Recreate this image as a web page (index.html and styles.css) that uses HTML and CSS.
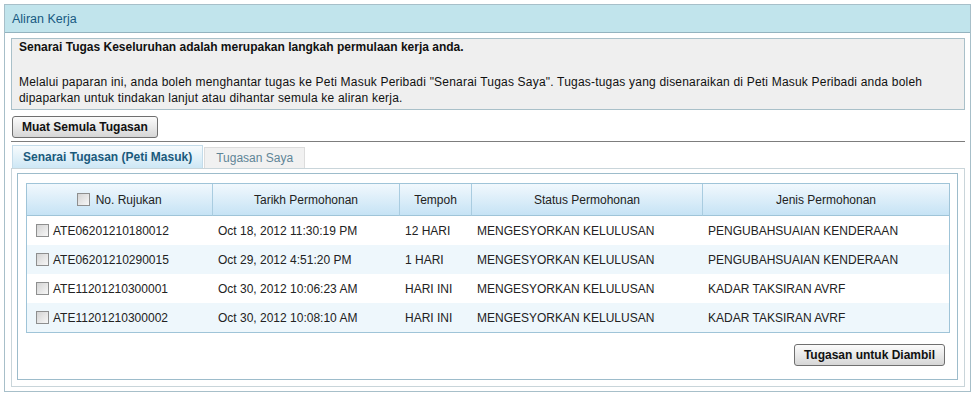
FILE: index.html
```html
<!DOCTYPE html>
<html lang="ms">
<head>
    <meta charset="UTF-8">
    <meta name="viewport" content="width=device-width, initial-scale=1.0">
    <title>Aliran Kerja</title>
    <link rel="stylesheet" href="styles.css">
</head>
<body>
    <div class="panel">
        <div class="panel-header">Aliran Kerja</div>
        <div class="panel-body">
            <div class="info-box">
                <p class="info-title">Senarai Tugas Keseluruhan adalah merupakan langkah permulaan kerja anda.</p>
                <p class="info-text">Melalui paparan ini, anda boleh menghantar tugas ke Peti Masuk Peribadi "Senarai Tugas Saya". Tugas-tugas yang disenaraikan di Peti Masuk Peribadi anda boleh dipaparkan untuk tindakan lanjut atau dihantar semula ke aliran kerja.</p>
            </div>

            <button class="btn btn-reload">Muat Semula Tugasan</button>
            <div class="divider"></div>

            <div class="tabs">
                <span class="tab active">Senarai Tugasan (Peti Masuk)</span>
                <span class="tab">Tugasan Saya</span>
            </div>

            <div class="tab-content">
                <div class="grid-box">
                    <table class="task-table">
                        <colgroup>
                            <col style="width: 185px">
                            <col style="width: 187px">
                            <col style="width: 72px">
                            <col style="width: 231px">
                            <col style="width: 247px">
                        </colgroup>
                        <thead>
                            <tr>
                                <th><input type="checkbox" class="chk"> No. Rujukan</th>
                                <th>Tarikh Permohonan</th>
                                <th>Tempoh</th>
                                <th>Status Permohonan</th>
                                <th>Jenis Permohonan</th>
                            </tr>
                        </thead>
                        <tbody>
                            <tr>
                                <td class="ref"><input type="checkbox" class="chk">ATE06201210180012</td>
                                <td>Oct 18, 2012 11:30:19 PM</td>
                                <td>12 HARI</td>
                                <td>MENGESYORKAN KELULUSAN</td>
                                <td>PENGUBAHSUAIAN KENDERAAN</td>
                            </tr>
                            <tr>
                                <td class="ref"><input type="checkbox" class="chk">ATE06201210290015</td>
                                <td>Oct 29, 2012 4:51:20 PM</td>
                                <td>1 HARI</td>
                                <td>MENGESYORKAN KELULUSAN</td>
                                <td>PENGUBAHSUAIAN KENDERAAN</td>
                            </tr>
                            <tr>
                                <td class="ref"><input type="checkbox" class="chk">ATE11201210300001</td>
                                <td>Oct 30, 2012 10:06:23 AM</td>
                                <td>HARI INI</td>
                                <td>MENGESYORKAN KELULUSAN</td>
                                <td>KADAR TAKSIRAN AVRF</td>
                            </tr>
                            <tr>
                                <td class="ref"><input type="checkbox" class="chk">ATE11201210300002</td>
                                <td>Oct 30, 2012 10:08:10 AM</td>
                                <td>HARI INI</td>
                                <td>MENGESYORKAN KELULUSAN</td>
                                <td>KADAR TAKSIRAN AVRF</td>
                            </tr>
                        </tbody>
                    </table>
                    <div class="grid-actions">
                        <button class="btn">Tugasan untuk Diambil</button>
                    </div>
                </div>
            </div>
        </div>
    </div>
</body>
</html>
```

FILE: styles.css
```css
body {
    font-family: "Liberation Sans", Arial, sans-serif;
    font-size: 12px;
    color: #111;
    margin: 0;
    padding: 4px;
    background-color: #fff;
}

.panel {
    border: 1px solid #a7bfc9;
}

.panel-header {
    height: 27px;
    line-height: 28px;
    padding-left: 7px;
    background-color: #c1e4ec;
    border-bottom: 1px solid #93b3bf;
    color: #175a82;
    font-size: 12.5px;
}

.panel-body {
    padding: 5px 5px 4px 6px;
}

.info-box {
    border: 1px solid #a9c0c9;
    background-color: #efefef;
    padding: 0 7px 3px;
    line-height: 16px;
}

.info-box p {
    margin: 0;
}

.info-box .info-title {
    font-weight: bold;
    margin-bottom: 19px;
}

.info-box .info-text {
    letter-spacing: 0.2px;
}

.btn {
    font-family: "Liberation Sans", Arial, sans-serif;
    font-size: 12px;
    font-weight: bold;
    color: #111;
    height: 22px;
    padding: 0 9px;
    white-space: nowrap;
    border: 1px solid #6f6f6f;
    border-radius: 3px;
    background: linear-gradient(#fbfbfb, #e9e9e9 50%, #d6d6d6);
    cursor: pointer;
}

.btn-reload {
    display: block;
    margin: 6px 0 0 1px;
}

.divider {
    height: 1px;
    margin-top: 3px;
    background-color: #7d7d7d;
}

.tabs {
    display: flex;
    align-items: flex-end;
    height: 23px;
    margin-top: 3px;
    padding-left: 1px;
}

.tab {
    height: 20px;
    line-height: 21px;
    padding: 0 11px;
    white-space: nowrap;
    border: 1px solid #dcdcdc;
    border-bottom: none;
    background-color: #f1f1f1;
    color: #5f8597;
}

.tab.active {
    height: 22px;
    line-height: 22px;
    padding: 0 10px;
    margin-right: 1px;
    border-color: #c4dcea;
    background: linear-gradient(#f7fbfd, #cde7f5);
    color: #1a5a7c;
    font-weight: bold;
}

.tab-content {
    border: 1px solid #c9d5da;
    padding: 4px 6px 6px 5px;
}

.grid-box {
    border: 1px solid #9dbccb;
    padding: 9px 7px 13px 8px;
}

.task-table {
    width: 924px;
    table-layout: fixed;
    border-collapse: separate;
    border-spacing: 0;
    border: 1px solid #9fc4d8;
}

.task-table th {
    height: 31px;
    padding: 0;
    font-weight: normal;
    color: #222;
    text-align: center;
    background: linear-gradient(#f1f8fd, #c6e3f5);
    border-bottom: 1px solid #9fc4d8;
    border-left: 1px solid #a9cce0;
}

.task-table th:first-child {
    border-left: none;
}

.task-table td {
    height: 29px;
    padding: 0 0 0 6px;
    color: #222;
    white-space: nowrap;
}

.task-table td.ref {
    padding-left: 9px;
}

.task-table tbody tr:nth-child(even) td {
    background-color: #eef7fc;
}

.chk {
    appearance: none;
    -webkit-appearance: none;
    width: 13px;
    height: 13px;
    margin: 0 4px 0 0;
    vertical-align: -2px;
    border: 1px solid #8e8f8f;
    background: linear-gradient(135deg, #d4d4d4, #f7f7f7);
}

.task-table th .chk {
    margin-right: 2px;
}

.grid-actions {
    display: flex;
    justify-content: flex-end;
    margin-top: 11px;
    padding-right: 5px;
}
```
